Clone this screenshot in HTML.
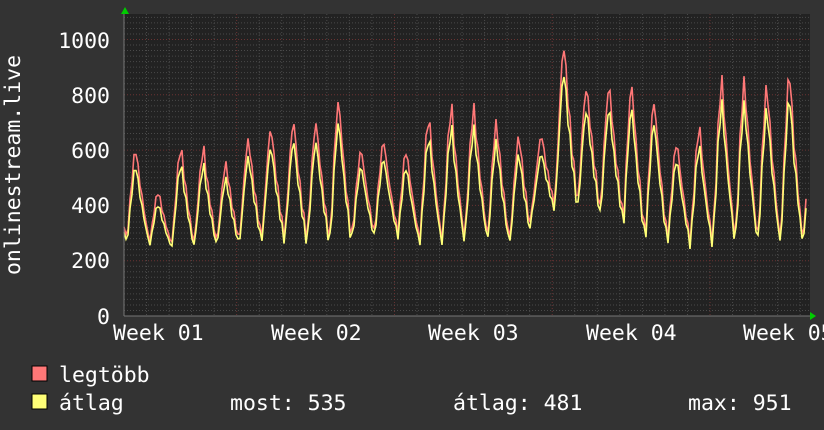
<!DOCTYPE html>
<html><head><meta charset="utf-8"><style>
html,body{margin:0;padding:0;background:#333;}
svg{display:block}
text{font-family:"DejaVu Sans Mono","Liberation Mono",monospace;fill:#fff;font-size:21.5px}
</style></head><body>
<svg id="g" width="824" height="430" viewBox="0 0 824 430" xmlns="http://www.w3.org/2000/svg">
<rect width="824" height="430" fill="#333"/>
<rect x="124" y="14" width="686" height="302" fill="#222"/>
<g id="grid"></g>
<polyline id="red" fill="none" stroke="#ff7777" stroke-width="1.6"/>
<polyline id="yel" fill="none" stroke="#ffff77" stroke-width="1.6"/>
<line x1="124" y1="316" x2="810" y2="316" stroke="#777"/>
<line x1="124" y1="14" x2="124" y2="316" stroke="#777"/>
<polygon points="121,14 125,7 129,14" fill="#0c0"/>
<polygon points="810,312 816,316 810,320" fill="#0c0"/>
<g text-anchor="end">
<text x="110" y="48">1000</text><text x="110" y="103">800</text><text x="110" y="158">600</text>
<text x="110" y="213">400</text><text x="110" y="268">200</text><text x="110" y="324">0</text>
</g>
<g>
<text x="113" y="340">Week 01</text><text x="271" y="340">Week 02</text><text x="428" y="340">Week 03</text>
<text x="586" y="340">Week 04</text><text x="743" y="340">Week 05</text>
</g>
<text transform="translate(20,165) rotate(-90)" text-anchor="middle">onlinestream.live</text>
<rect x="32" y="366" width="15" height="15" fill="#ff7777" stroke="#000"/>
<rect x="32" y="394" width="15" height="15" fill="#ffff77" stroke="#000"/>
<text x="59" y="382">legtöbb</text>
<text x="59" y="410">átlag</text>
<text x="230" y="410">most: 535</text>
<text x="453" y="410">átlag: 481</text>
<text x="688" y="410">max: 951</text>
</svg>
<script>
var g=document.getElementById('grid'),h='';
function Y(v){return 316-v*0.2765;}
for(var v=20;v<1100;v+=20){var y=Y(v);if(y<14)break;var red=(v%200==0);
h+='<line x1="124" x2="810" y1="'+y+'" y2="'+y+'" stroke="'+(red?'#6a3333':'#4a4a4a')+'" stroke-dasharray="1,2"/>';}
for(var x=124+22.5;x<810;x+=22.54){var red=Math.abs(((x-236)/157.8)-Math.round((x-236)/157.8))<0.02;
h+='<line y1="14" y2="316" x1="'+x+'" x2="'+x+'" stroke="'+(red?'#6a3333':'#4a4a4a')+'" stroke-dasharray="1,2"/>';}
g.innerHTML=h;
var peaks=[600,450,610,600,550,640,680,700,700,780,600,630,600,720,750,750,700,650,650,980,830,830,830,780,630,680,850,850,830,870,640];
var mins=[280,260,260,270,270,280,290,280,280,270,300,320,280,270,280,300,270,280,400,420,400,380,300,280,280,270,280,280,280,280,280];
var r=[],yl=[];
for(var x=124;x<=806;x+=2){var d=(x-124)/22.54-0.1;var i=Math.max(0,Math.floor(d));var t=d-Math.floor(d);
var p=peaks[Math.min(i,peaks.length-1)],m=mins[Math.min(i,mins.length-1)];
var s;if(t<0.45)s=Math.pow(Math.sin(t/0.45*Math.PI/2),1.5);else s=1-Math.pow((t-0.45)/0.55,0.8);
s+=0.05*Math.sin(x*1.7);
var v=m+(p-m)*s;var vy=m*0.95+(p*0.9-m*0.95)*s;
r.push(x+','+Y(v).toFixed(1));yl.push(x+','+Y(vy).toFixed(1));}
document.getElementById('red').setAttribute('points',r.join(' '));
document.getElementById('yel').setAttribute('points',yl.join(' '));
</script>
</body></html>
